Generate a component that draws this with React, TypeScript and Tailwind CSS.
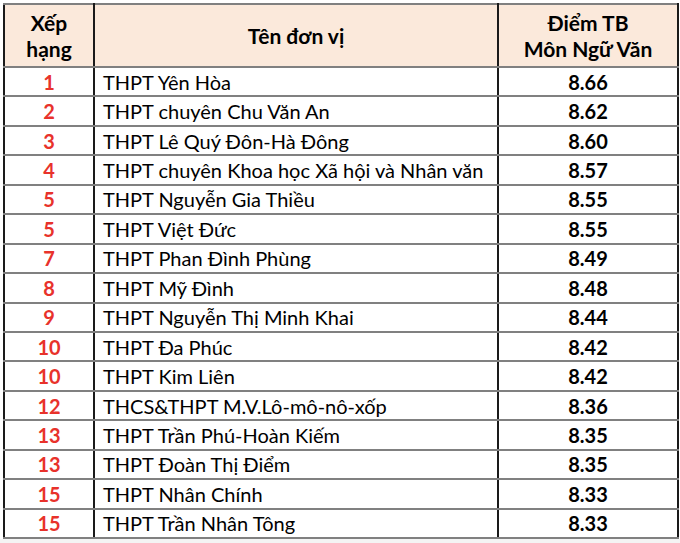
import React from "react";

const rows: [string, string, string][] = [
  ["1", "THPT Yên Hòa", "8.66"],
  ["2", "THPT chuyên Chu Văn An", "8.62"],
  ["3", "THPT Lê Quý Đôn-Hà Đông", "8.60"],
  ["4", "THPT chuyên Khoa học Xã hội và Nhân văn", "8.57"],
  ["5", "THPT Nguyễn Gia Thiều", "8.55"],
  ["5", "THPT Việt Đức", "8.55"],
  ["7", "THPT Phan Đình Phùng", "8.49"],
  ["8", "THPT Mỹ Đình", "8.48"],
  ["9", "THPT Nguyễn Thị Minh Khai", "8.44"],
  ["10", "THPT Đa Phúc", "8.42"],
  ["10", "THPT Kim Liên", "8.42"],
  ["12", "THCS&THPT M.V.Lô-mô-nô-xốp", "8.36"],
  ["13", "THPT Trần Phú-Hoàn Kiếm", "8.35"],
  ["13", "THPT Đoàn Thị Điểm", "8.35"],
  ["15", "THPT Nhân Chính", "8.33"],
  ["15", "THPT Trần Nhân Tông", "8.33"],
];

export default function App() {
  return (
    <div className="w-[680px] h-[543px] bg-[#f4f4f4] overflow-hidden" style={{ fontFamily: "Lato, 'Noto Sans', sans-serif" }}>
      <div className="bg-white pt-[3px] pl-[3px] pr-[3px]">
        <table className="border-collapse text-[20px] text-black table-fixed w-[674px]">
          <colgroup>
            <col className="w-[90px]" />
            <col className="w-[404px]" />
            <col className="w-[180px]" />
          </colgroup>
          <thead>
            <tr className="h-[63px] bg-[#fbe9db] text-[21px]">
              <th className="border-t-2 border-b-2 border-t-[#808080] border-b-[#808080] border-l-2 border-l-[#1a1a1a] border-r-2 border-r-[#1a1a1a] font-bold leading-[26px] text-center">
                Xếp<br />hạng
              </th>
              <th className="border-t-2 border-b-2 border-t-[#808080] border-b-[#808080] border-r-2 border-r-[#1a1a1a] font-bold text-center">
                Tên đơn vị
              </th>
              <th className="border-t-2 border-b-2 border-t-[#808080] border-b-[#808080] border-r-2 border-r-[#1a1a1a] font-bold leading-[26px] text-center">
                Điểm TB<br />Môn Ngữ Văn
              </th>
            </tr>
          </thead>
          <tbody>
            {rows.map(([r, n, s], i) => (
              <tr key={i} className="h-[29.44px] bg-white">
                <td className="border-b-2 border-b-[#808080] border-l-2 border-l-[#1a1a1a] border-r-2 border-r-[#1a1a1a] text-center font-bold text-[#e8322b] p-0 leading-none">
                  {r}
                </td>
                <td className="border-b-2 border-b-[#808080] border-r-2 border-r-[#1a1a1a] pl-[8px] p-0 leading-none whitespace-nowrap">
                  {n}
                </td>
                <td className="border-b-2 border-b-[#808080] border-r-2 border-r-[#1a1a1a] text-center font-bold p-0 leading-none">
                  {s}
                </td>
              </tr>
            ))}
          </tbody>
        </table>
      </div>
    </div>
  );
}
